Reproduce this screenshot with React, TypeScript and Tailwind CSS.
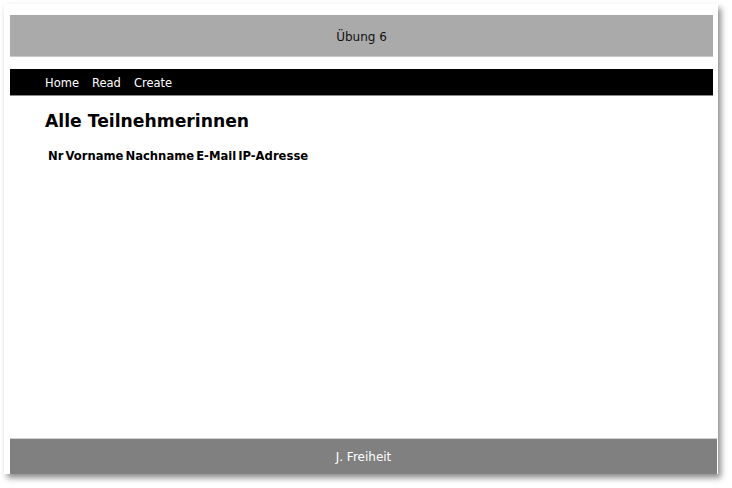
const App: React.FC = () => {
  return (
    <div className="w-[732px] h-[488px] bg-white overflow-hidden font-['DejaVu_Sans',Verdana,sans-serif]">
      <div className="ml-[4px] mt-[4px] w-[714px] h-[470px] bg-white shadow-[3px_4px_6px_rgba(0,0,0,0.45)] flex flex-col pl-[6px] pt-[11px]">
        <header className="w-[703px] h-[42px] bg-[#aaaaaa] border-b border-[#c8c8c8] flex items-center justify-center pt-[2px] text-[12px] text-[#111]">
          Übung 6
        </header>

        <nav className="mt-[12px] w-[703px] h-[27px] bg-black border-b border-[#8a8a8a] flex items-center gap-[13px] pl-[35px] pt-[3px] text-[11.5px] text-white">
          <a href="#">Home</a>
          <a href="#">Read</a>
          <a href="#">Create</a>
        </nav>

        <main className="flex-1 pl-[35px]">
          <h1 className="mt-[13px] text-[17.2px] font-bold text-black">Alle Teilnehmerinnen</h1>
          <table className="mt-[11px] ml-[1px] text-[11.6px] font-bold text-black border-separate border-spacing-[2px]">
            <thead>
              <tr>
                <th className="p-0">Nr</th>
                <th className="p-0">Vorname</th>
                <th className="p-0">Nachname</th>
                <th className="p-0">E-Mail</th>
                <th className="p-0">IP-Adresse</th>
              </tr>
            </thead>
          </table>
        </main>

        <footer className="w-[707px] h-[36px] bg-[#808080] border-t border-[#d0d0d0] flex items-center justify-center text-[12px] text-white">
          J. Freiheit
        </footer>
      </div>
    </div>
  );
};

export default App;
